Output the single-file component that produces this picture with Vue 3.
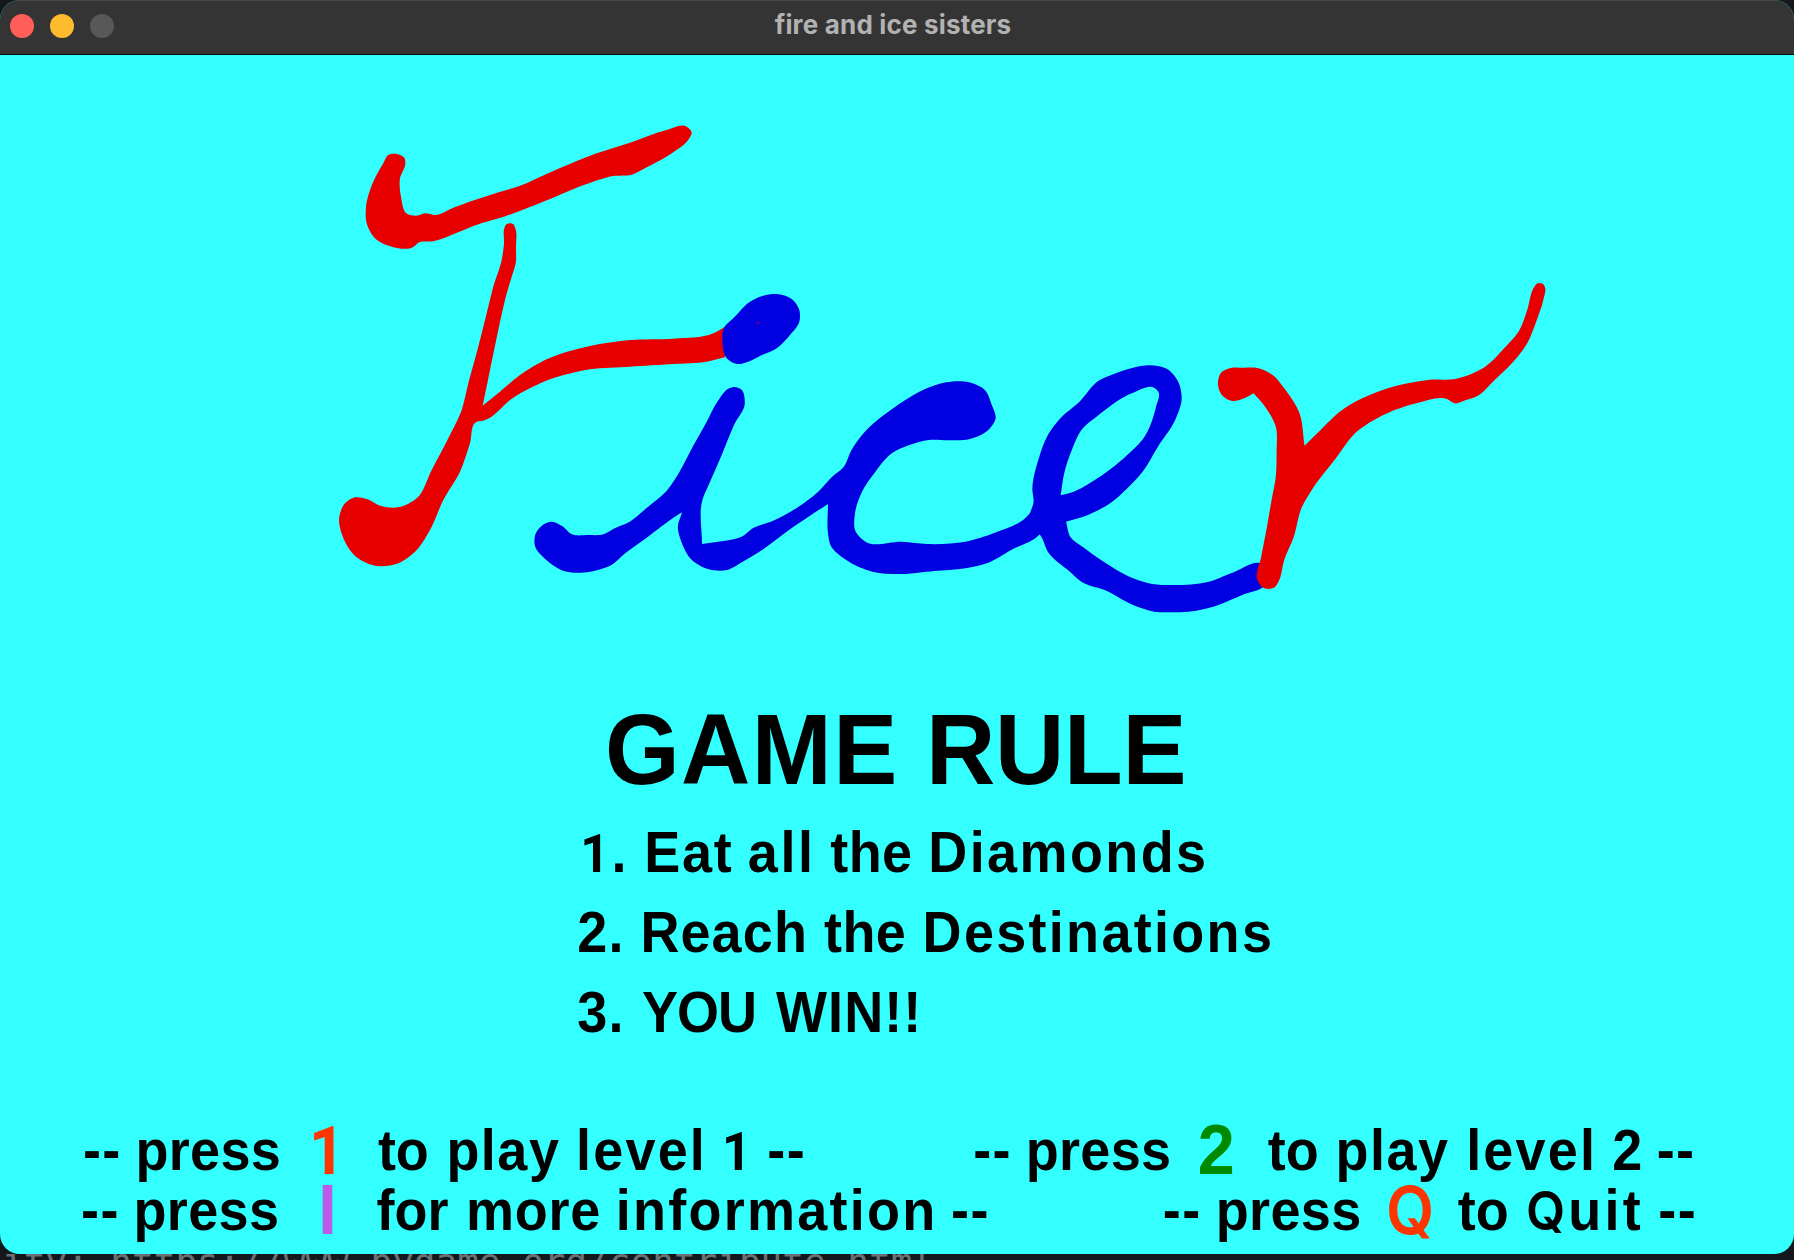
<script setup>
const KEY_RED = '#ff3500'

// Each word: [text, x, letter spacing, key colour]
const rules = [
  [['1.', 580.2, 2.2], ['Eat', 644.2, 1.8], ['all', 747.8, 2.6], ['the', 830.3, 0.4], ['Diamonds', 928.3, 2.4]],
  [['2.', 577.3, 1.2], ['Reach', 640.4, 1.1], ['the', 824.1, 0.4], ['Destinations', 922.6, 2.3]],
  [['3.', 577.3, 1.2], ['YOU', 642, -1], ['WIN!!', 776, 1.1]],
]
const prompts = [
  [
    ['--', 82.9, 1.4], ['press', 135.4, 0.35], ['1', 309, 0, KEY_RED], ['to', 377.9, 0], ['play', 446.4, 1.5],
    ['level', 576, 2.2], ['1', 722, 0], ['--', 767.4, 1.4],
    ['--', 973.2, 1.4], ['press', 1025.7, 0.35], ['2', 1197.8, 0, '#008a00'], ['to', 1267.9, 0],
    ['play', 1335.6, 1.5], ['level', 1466.2, 2.2], ['2', 1612.3, 0], ['--', 1656.8, 1.4],
  ],
  [
    ['--', 81.1, 1.4], ['press', 133.5, 0.35], ['I', 318.3, 0, '#bb5ae6'], ['for', 376.6, 0], ['more', 466.1, 0.7],
    ['information', 615.8, 2.25], ['--', 951.1, 1.4],
    ['--', 1162.8, 1.4], ['press', 1215.8, 0.35], ['Q', 1386, 0, KEY_RED], ['to', 1457.9, 0],
    ['Quit', 1526, 3.2], ['--', 1658.4, 1.4],
  ],
]
const layout = (line) =>
  line.map(([text, x, spacing, color], i) => ({
    parts: text.split(/([1Q])/).filter(Boolean),
    color,
    style: {
      marginLeft: i === 0 ? `${x}px` : undefined,
      width: i < line.length - 1 ? `${line[i + 1][1] - x}px` : undefined,
      letterSpacing: `${spacing}px`,
      color,
    },
  }))
const ruleLines = rules.map(layout)
const promptLines = prompts.map(layout)

// Closed smooth outline through the points; sharp turns stay corners.
function outline(src, ox, oy, sx, sy) {
  const nums = src.trim().split(/[\s,]+/).map(Number)
  const p = []
  for (let i = 0; i < nums.length; i += 2) p.push([ox + nums[i] * sx, oy + nums[i + 1] * sy])
  const n = p.length
  const tan = p.map((c, i) => {
    const a = p[(i + n - 1) % n]
    const b = p[(i + 1) % n]
    const u = [c[0] - a[0], c[1] - a[1]]
    const v = [b[0] - c[0], b[1] - c[1]]
    const lu = Math.hypot(...u)
    const lv = Math.hypot(...v)
    if ((u[0] * v[0] + u[1] * v[1]) / (lu * lv) < 0.3) return null
    const t = [(u[0] / lu) * lv + (v[0] / lv) * lu, (u[1] / lu) * lv + (v[1] / lv) * lu]
    const lt = Math.hypot(...t)
    return [t[0] / lt, t[1] / lt]
  })
  const f = (x) => x.toFixed(1)
  let d = `M${f(p[0][0])} ${f(p[0][1])}`
  for (let i = 0; i < n; i++) {
    const a = p[i]
    const j = (i + 1) % n
    const b = p[j]
    const len = Math.hypot(b[0] - a[0], b[1] - a[1])
    const k = len / 3.3
    const chord = [(b[0] - a[0]) / len, (b[1] - a[1]) / len]
    const ta = tan[i] || chord
    const tb = tan[j] || chord
    d += `C${f(a[0] + ta[0] * k)} ${f(a[1] + ta[1] * k)} ${f(b[0] - tb[0] * k)} ${f(b[1] - tb[1] * k)} ${f(b[0])} ${f(b[1])}`
  }
  return d + 'Z'
}
const T = 1 / 3
const fBox = (s) => outline(s, 320, 45, T, T)
const icBox = (s) => outline(s, 520, 215, 0.35077, T)
const erBox = (s) => outline(s, 980, 205, 0.38265, T)

const fBar = fBox(`190,190 205,165 230,162 254,175 256,190 240,235 243,290 262,342 290,347 315,340 345,345 400,323 520,282
  600,257 700,213 830,160 930,128 1040,90 1100,80 1115,97 1108,115 1060,157 980,202 935,224 880,228 800,252 690,297 560,347
  460,378 400,403 340,424 295,428 280,441 215,440 165,415 140,370 138,320 160,245`)
const fStem = fBox(`553,385 558,374 568,370 580,373 586,385 588,440 587,490 575,530 555,600 535,690 510,810 488,917 540,875
  600,825 680,778 810,738 930,720 1060,716 1180,700 1215,680 1215,772 1160,785 1060,792 930,800 810,808 690,838 580,893
  490,962 470,965 450,1030 420,1115 370,1200 330,1290 290,1350 235,1390 170,1398 110,1372 75,1325 58,1250 75,1210
  100,1193 140,1197 180,1217 235,1222 290,1195 335,1110 385,1015 425,930 445,850 475,740 500,640 520,560 545,480 552,430`)
const iDot = fBox(`1213,682 1240,655 1290,605 1330,587 1375,583 1415,597 1438,630 1438,665 1410,705 1370,745 1320,768
  1285,785 1250,792 1218,772 1208,735`)
const ic = icBox(`45,790 65,765 90,755 120,768 148,793 195,795 238,793 270,775 310,757 360,715 420,660 455,605 490,535
  530,460 560,400 597,355 612,351 630,358 641,400 610,465 575,555 540,640 520,690 519,822 560,816 640,795 660,777
  720,753 790,713 850,665 890,620 923,590 945,540 975,495 1070,410 1160,355 1215,337 1280,337 1325,360 1345,405
  1356,445 1340,475 1280,508 1225,511 1165,510 1110,525 1060,550 1010,610 975,665 955,730 957,785 985,815 1090,815
  1160,822 1270,815 1350,790 1440,745 1465,715 1510,740 1480,795 1400,840 1335,878 1270,895 1180,903 1090,912 1005,905
  930,870 885,825 878,790 878,702 830,735 760,785 690,840 635,875 590,900 535,897 490,870 460,815 450,770 462,727
  445,738 365,800 300,850 265,882 200,905 125,903 75,870 42,825`)
const e = erBox(`130,765 140,725 137,690 155,590 175,530 210,475 260,425 310,362 350,342 400,323 445,316 490,328 518,365
  527,415 510,480 465,560 425,635 385,685 340,730 270,770 225,785 236,830 270,862 325,907 400,955 450,972 500,975 595,966
  660,938 735,910 760,930 740,980 690,1003 610,1040 545,1055 500,1057 455,1055 400,1035 330,992 265,965 235,935 180,880
  155,822 130,800`) + erBox(`211,706 220,640 240,570 265,510 310,465 400,398 455,383 466,395 460,440 430,530 380,590
  300,660 245,695`)
const r = erBox(`622,375 630,338 655,324 690,323 725,324 765,345 795,385 835,460 848,557 890,510 940,455 1060,387 1170,360
  1245,356 1320,320 1370,265 1410,210 1430,150 1450,78 1455,71 1470,71 1476,80 1472,120 1455,180 1430,250 1390,310
  1345,360 1300,408 1270,420 1240,430 1222,418 1140,430 1060,462 980,520 930,595 870,685 840,745 820,830 795,900 780,965
  770,982 740,983 725,960 735,890 750,800 762,720 773,650 775,575 773,500 745,440 715,400 690,415 660,423 632,405`)
</script>

<template>
  <div class="desktop">
    <div class="window">
      <header class="titlebar">
        <div class="lights">
          <i class="light close"></i>
          <i class="light minimise"></i>
          <i class="light zoom"></i>
        </div>
        <span class="caption">fire and ice sisters</span>
      </header>
      <main class="game">
        <svg class="logo" width="1794" height="646" viewBox="0 0 1794 646">
          <g fill="#e80000">
            <path :d="fBar" />
            <path :d="fStem" />
          </g>
          <g fill="#0000e0">
            <path :d="iDot" />
            <path :d="ic" />
            <path :d="e" fill-rule="evenodd" />
          </g>
          <path :d="r" fill="#e80000" />
          <circle cx="758" cy="267.5" r="1.6" fill="#5a00a0" />
        </svg>
        <h1 class="heading"><span class="game-word">GAME</span><span class="rule-word">RULE</span></h1>
        <section class="rules">
          <div v-for="(line, i) in ruleLines" :key="i" class="line">
            <span v-for="(w, j) in line" :key="j" class="word" :style="w.style"><span
              v-for="(part, k) in w.parts" :key="k" :class="{ one: part === '1' }">{{ part }}</span></span>
          </div>
        </section>
        <footer class="prompts">
          <div v-for="(line, i) in promptLines" :key="i" class="line">
            <span v-for="(w, j) in line" :key="j" class="word" :class="{ keycap: w.color }" :style="w.style"><span
              v-for="(part, k) in w.parts" :key="k" :class="{ one: part === '1', queue: part === 'Q' }">{{ part }}</span></span>
          </div>
        </footer>
      </main>
    </div>
    <div class="terminal">ity: https://www.pygame.org/contribute.html</div>
  </div>
</template>

<style>
body {
  margin: 0;
  overflow: hidden;
}
</style>

<style scoped>
.desktop {
  width: 1794px;
  height: 1260px;
  overflow: hidden;
  background: #14181d;
}
.window {
  width: 1794px;
  height: 1254px;
  border-radius: 20px;
  overflow: hidden;
  background: #33ffff;
}
.titlebar {
  display: grid;
  grid-template-columns: 1fr auto 1fr;
  align-items: center;
  box-sizing: border-box;
  height: 55px;
  padding-bottom: 3px;
  background: #343434;
  border-bottom: 1px solid #061414;
  box-shadow: inset 0 1px 0 #4a4a4a;
}
.lights {
  display: flex;
  gap: 16px;
  padding-left: 10px;
}
.light {
  width: 24px;
  height: 24px;
  border-radius: 50%;
}
.close {
  background: #ff5f58;
}
.minimise {
  background: #ffbb2e;
}
.zoom {
  background: #585858;
}
.caption {
  height: 51px;
  padding-right: 8px;
  color: #b2b2b2;
  font: 700 26px/50px Inter, sans-serif;
  letter-spacing: 0.18px;
  white-space: nowrap;
}
.game {
  display: flex;
  flex-direction: column;
  height: 1199px;
  color: #000;
  font-family: "Liberation Sans", Arial, sans-serif;
  font-weight: 700;
}
.logo {
  display: block;
  flex: none;
}
.heading {
  display: flex;
  margin: 0 0 12px 605px;
  font-size: 96px;
  line-height: 100px;
  transform: scaleY(1.05);
  transform-origin: 0 83px;
}
.game-word {
  width: 321px;
  letter-spacing: 1.4px;
}
.rule-word {
  letter-spacing: -0.3px;
}
.line {
  display: flex;
  align-items: flex-start;
  font-size: 54px;
  white-space: nowrap;
  transform: scaleY(1.06);
}
.word {
  flex: none;
}
.rules .line {
  height: 80px;
  line-height: 80px;
  transform-origin: 0 58.7px;
}
.prompts {
  margin-top: 68px;
}
.prompts .line {
  height: 60px;
  line-height: 60px;
  transform-origin: 0 48.7px;
}
.keycap {
  font-size: 66.5px;
}
.one {
  font-family: Roboto, sans-serif;
  font-size: 0.94em;
  line-height: 0;
}
.queue {
  font-family: Inter, sans-serif;
  font-size: 0.94em;
  font-weight: 600;
  line-height: 0;
}
.terminal {
  height: 6px;
  padding-left: 2px;
  overflow: hidden;
  color: #6c7074;
  font: 36px/16px "DejaVu Sans Mono", monospace;
  white-space: pre;
}
</style>
